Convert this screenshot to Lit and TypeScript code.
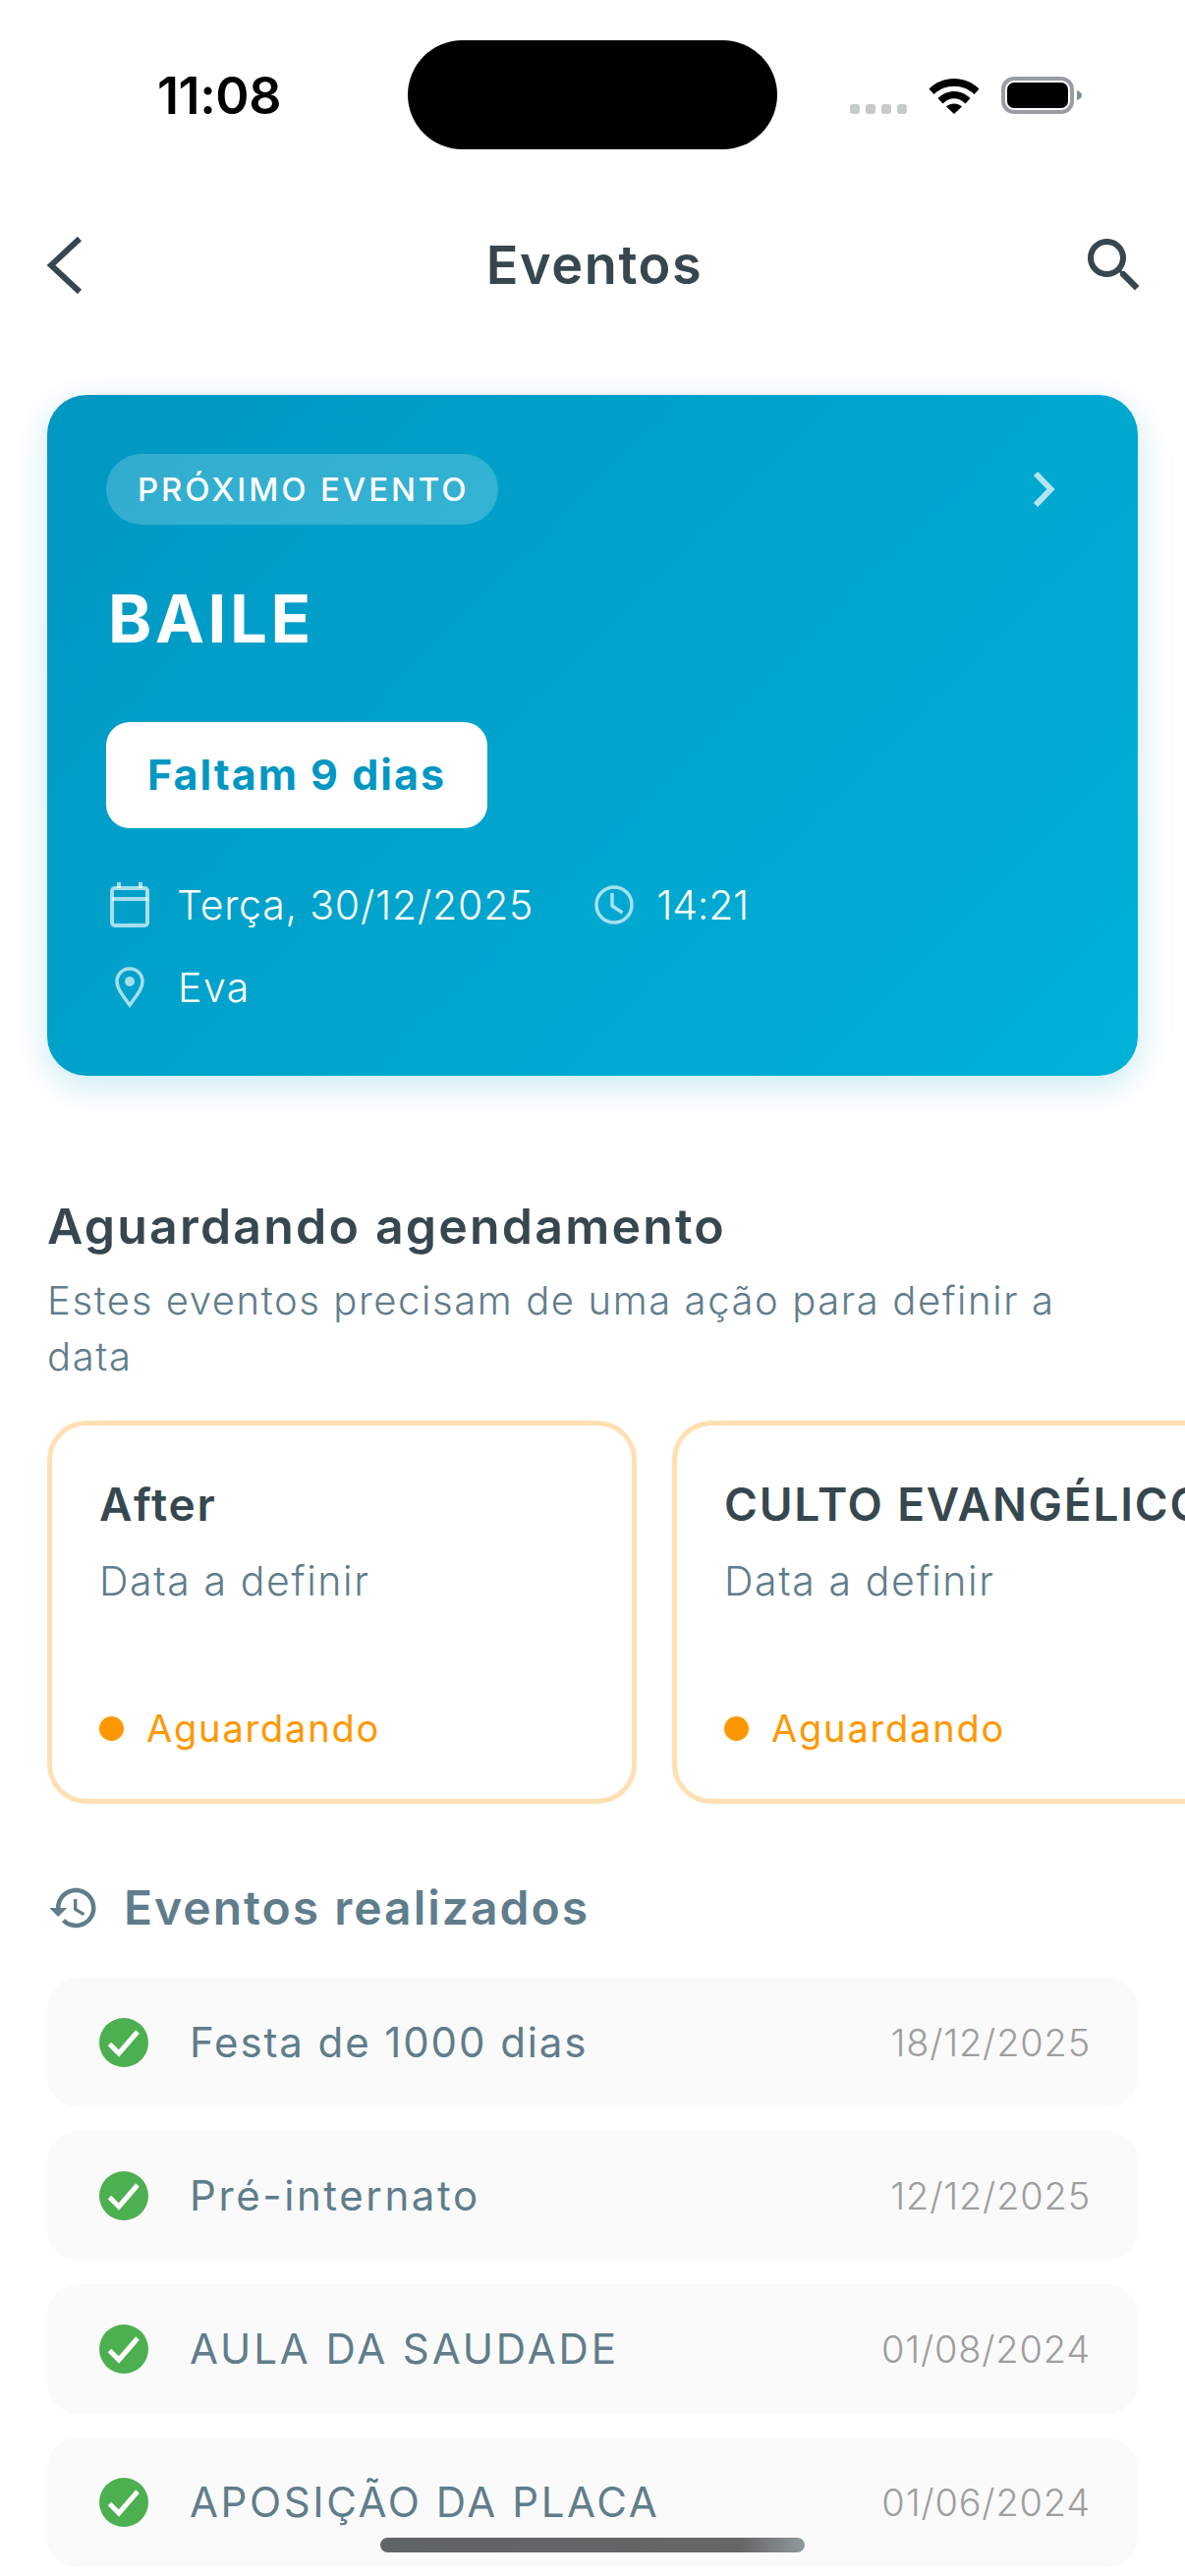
import { LitElement, css, html, svg } from "lit";
import { customElement } from "lit/decorators.js";
import { styleMap } from "lit/directives/style-map.js";

const pending = ["After", "CULTO EVANGÉLICO"];
// spacing per row evens out the width gap to the original typeface
const past = [
  { name: "Festa de 1000 dias", date: "18/12/2025", spacing: 1.9 },
  { name: "Pré-internato", date: "12/12/2025", spacing: 2.6 },
  { name: "AULA DA SAUDADE", date: "01/08/2024", spacing: 2.9 },
  { name: "APOSIÇÃO DA PLACA", date: "01/06/2024", spacing: 2.6 },
];

const checkIcon = svg`<circle cx="25" cy="25" r="25" fill="#4caf50"/><path d="M10.5 26.5 20 36 39 14" fill="none" stroke="#fff" stroke-width="5"/>`;

@customElement("app-root")
export class AppRoot extends LitElement {
  static styles = css`
    :host {
      display: block;
      position: relative;
      width: 1206px;
      height: 2622px;
      overflow: hidden;
      background: #fff;
      font-family: Inter, "Liberation Sans", sans-serif;
    }
    svg {
      display: block;
      flex: none;
    }
    .status {
      display: flex;
      align-items: flex-start;
      height: 200px;
      box-sizing: border-box;
      padding: 41px 0 0 160px;
    }
    .time {
      width: 255px;
      margin-top: 34px;
      font: 600 52px/46px Inter, sans-serif;
      letter-spacing: -0.4px;
      color: #000;
    }
    .island {
      width: 376px;
      height: 111px;
      border-radius: 56px;
      background: #000;
    }
    .signal {
      display: flex;
      gap: 6px;
      margin: 65px 22px 0 74px;
    }
    .signal i {
      width: 10px;
      height: 10px;
      border-radius: 3px;
      background: #c5caca;
    }
    .wifi {
      margin: 37px 22px 0 0;
    }
    .battery {
      margin-top: 37px;
    }
    .nav {
      display: grid;
      grid-template-columns: 1fr auto 1fr;
      align-items: center;
      height: 140px;
      padding: 0 36px 0 40px;
    }
    .nav svg:last-child {
      justify-self: end;
    }
    .nav h1 {
      margin: 0;
      font: 600 54px/60px Inter, sans-serif;
      letter-spacing: 1.6px;
      color: #37474f;
    }
    main {
      padding: 62px 48px 0;
    }
    .hero {
      box-sizing: border-box;
      height: 693px;
      padding: 60px 78px 0 60px;
      border-radius: 40px;
      background: linear-gradient(135deg, #0097c2 0%, #00b2d9 100%);
      box-shadow: 0 10px 36px rgba(0, 160, 205, 0.22);
      color: #fff;
    }
    .hero-top {
      display: flex;
      align-items: center;
      justify-content: space-between;
    }
    .pill {
      box-sizing: border-box;
      width: 399px;
      height: 72px;
      padding-left: 32px;
      border-radius: 36px;
      background: rgba(255, 255, 255, 0.2);
      font: 500 33px/72px Inter, sans-serif;
      letter-spacing: 2.9px;
      white-space: nowrap;
    }
    .hero h2 {
      margin: 56px 0 0 2px;
      font: 700 67px/80px Inter, sans-serif;
      letter-spacing: 3.6px;
    }
    .count {
      box-sizing: border-box;
      width: 388px;
      height: 108px;
      margin-top: 65px;
      border-radius: 24px;
      background: #fff;
      text-align: center;
      font: 700 43px/106px Inter, sans-serif;
      letter-spacing: 2px;
      color: #0097c2;
    }
    .meta {
      display: flex;
      align-items: center;
      height: 50px;
      font: 300 41px/50px Inter, sans-serif;
      letter-spacing: 0.8px;
      white-space: nowrap;
    }
    .meta.first {
      margin-top: 53px;
    }
    .meta.second {
      margin-top: 34px;
    }
    .date {
      margin: 0 62px 0 26px;
    }
    .clock-time {
      margin-left: 23px;
      letter-spacing: -0.2px;
    }
    .place {
      margin-left: 33px;
      letter-spacing: 1.5px;
    }
    .section-title {
      margin: 128px 0 0;
      font: 600 50px/50px Inter, sans-serif;
      letter-spacing: 2.2px;
      color: #37474f;
    }
    .section-sub {
      margin: 22px 0 0;
      font: 300 40px/57px Inter, sans-serif;
      letter-spacing: 1.6px;
      color: #607d8b;
    }
    .cards {
      display: flex;
      gap: 36px;
      margin: 37px -48px 0 0;
      overflow: hidden;
    }
    .card {
      flex: none;
      box-sizing: border-box;
      width: 600px;
      height: 390px;
      padding: 55px 0 0 48px;
      border: 5px solid #ffe0b2;
      border-radius: 40px;
      background: #fff;
    }
    .card h3 {
      margin: 0;
      font: 600 46px/50px Inter, sans-serif;
      letter-spacing: 1.8px;
      color: #37474f;
      white-space: nowrap;
    }
    .card p {
      margin: 28px 0 0;
      font: 300 41px/50px Inter, sans-serif;
      letter-spacing: 1.6px;
      color: #607d8b;
    }
    .state {
      display: flex;
      align-items: center;
      gap: 23px;
      margin-top: 100px;
      font: 400 38px/50px Inter, sans-serif;
      letter-spacing: 1.8px;
      color: #ff9800;
    }
    .state i {
      width: 25px;
      height: 25px;
      border-radius: 50%;
      background: #ff9800;
    }
    .past-title {
      display: flex;
      align-items: center;
      gap: 24px;
      height: 50px;
      margin: 81px 0 0;
      font: 600 48px/50px Inter, sans-serif;
      letter-spacing: 2px;
      color: #607d8b;
    }
    .rows {
      display: flex;
      flex-direction: column;
      gap: 24px;
      margin-top: 46px;
    }
    .row {
      display: flex;
      align-items: center;
      height: 132px;
      padding: 0 48px 0 53px;
      border-radius: 32px;
      background: #fafafa;
    }
    .row .name {
      flex: 1;
      margin-left: 42px;
      font: 400 42px/50px Inter, sans-serif;
      color: #607d8b;
      white-space: nowrap;
    }
    .row .when {
      font: 300 38px/50px Inter, sans-serif;
      letter-spacing: 0.8px;
      color: #9e9e9e;
    }
    .home {
      position: absolute;
      left: 387px;
      top: 2583px;
      width: 432px;
      height: 15px;
      border-radius: 8px;
      background: linear-gradient(90deg, #5f6466 0%, #666 85%, #8f9a9e 100%);
    }
  `;

  render() {
    return html`
      <div class="status">
        <div class="time">11:08</div>
        <div class="island"></div>
        <div class="signal"><i></i><i></i><i></i><i></i></div>
        <svg class="wifi" width="52" height="38" viewBox="0 0 52 38">
          <path d="M0.5 12.5C14-1.500 38-1.500 51.500 12.500L46.500 18C35.500 7 16.500 7 5.500 18Z" fill="#000"/>
          <path d="M9.500 22C19 12.500 33 12.500 42.500 22L37.500 27.500C30.500 20.500 21.500 20.500 14.500 27.500Z" fill="#000"/>
          <path d="M18 30.500C22.500 26.500 29.500 26.500 34 30.500L26 38Z" fill="#000"/>
        </svg>
        <svg class="battery" width="84" height="38" viewBox="0 0 84 38">
          <rect x="2" y="2" width="70" height="34" rx="11" fill="none" stroke="#9a9ea2" stroke-width="4"/>
          <rect x="6" y="6" width="62" height="26" rx="7" fill="#000"/>
          <path d="M77 14c3 1 5 3 5 5s-2 4-5 5Z" fill="#7f8c95"/>
        </svg>
      </div>
      <div class="nav">
        <svg width="50" height="64" viewBox="0 0 50 64">
          <path d="M41 5 12 32l29 27" fill="none" stroke="#37474f" stroke-width="6"/>
        </svg>
        <h1>Eventos</h1>
        <svg width="72" height="72" viewBox="0 0 24 24" fill="#37474f">
          <path d="M15.500 14h-.79l-.28-.27C15.410 12.590 16 11.110 16 9.500 16 5.910 13.090 3 9.500 3S3 5.910 3 9.500 5.910 16 9.500 16c1.610 0 3.090-.59 4.230-1.570l.27.28v.79l5 4.990L20.490 19l-4.990-5zm-6 0C7.010 14 5 11.990 5 9.500S7.010 5 9.500 5 14 7.010 14 9.500 11.990 14 9.500 14z"/>
        </svg>
      </div>
      <main>
        <section class="hero">
          <div class="hero-top">
            <div class="pill">PRÓXIMO EVENTO</div>
            <svg width="34" height="40" viewBox="0 0 34 40">
              <path d="M8 4l15.500 16L8 36" fill="none" stroke="rgba(255,255,255,.7)" stroke-width="6"/>
            </svg>
          </div>
          <h2>BAILE</h2>
          <div class="count">Faltam 9 dias</div>
          <div class="meta first">
            <svg width="44" height="48" viewBox="0 0 44 48" style="margin-left:2px" fill="none" stroke="rgba(255,255,255,.65)" stroke-width="4">
              <rect x="4" y="7" width="36" height="38" rx="3"/>
              <path d="M4 18h36M11 1v6M33 1v6"/>
            </svg>
            <span class="date">Terça, 30/12/2025</span>
            <svg width="40" height="40" viewBox="0 0 40 40" fill="none" stroke="rgba(255,255,255,.65)" stroke-width="3.500">
              <circle cx="20" cy="20" r="18"/>
              <path d="M18 8v13l10.500 7"/>
            </svg>
            <span class="clock-time">14:21</span>
          </div>
          <div class="meta second">
            <svg width="32" height="42" viewBox="0 0 32 42" style="margin-left:8px">
              <path d="M16 39C8 28 3 22 3 15a13 13 0 0 1 26 0c0 7-5 13-13 24Z" fill="none" stroke="rgba(255,255,255,.65)" stroke-width="3.500"/>
              <circle cx="16" cy="15" r="5" fill="rgba(255,255,255,.65)"/>
            </svg>
            <span class="place">Eva</span>
          </div>
        </section>
        <h2 class="section-title">Aguardando agendamento</h2>
        <p class="section-sub">Estes eventos precisam de uma ação para definir a<br />data</p>
        <div class="cards">
          ${pending.map(
            (name) => html`
              <div class="card">
                <h3>${name}</h3>
                <p>Data a definir</p>
                <div class="state"><i></i>Aguardando</div>
              </div>
            `
          )}
        </div>
        <div class="past-title">
          <svg width="54" height="54" viewBox="0 0 24 24" fill="#607d8b">
            <path d="M13 3c-4.970 0-9 4.030-9 9H1l3.890 3.890.07.14L9 12H6c0-3.870 3.130-7 7-7s7 3.130 7 7-3.130 7-7 7c-1.930 0-3.680-.79-4.940-2.060l-1.420 1.420C8.270 19.990 10.510 21 13 21c4.970 0 9-4.030 9-9s-4.030-9-9-9zm-1 5v5l4.280 2.540.72-1.210-3.500-2.080V8H12z"/>
          </svg>
          Eventos realizados
        </div>
        <div class="rows">
          ${past.map(
            (item) => html`
              <div class="row">
                <svg width="50" height="50" viewBox="0 0 50 50">${checkIcon}</svg>
                <span class="name" style=${styleMap({ letterSpacing: `${item.spacing}px` })}>${item.name}</span>
                <span class="when">${item.date}</span>
              </div>
            `
          )}
        </div>
      </main>
      <div class="home"></div>
    `;
  }
}
